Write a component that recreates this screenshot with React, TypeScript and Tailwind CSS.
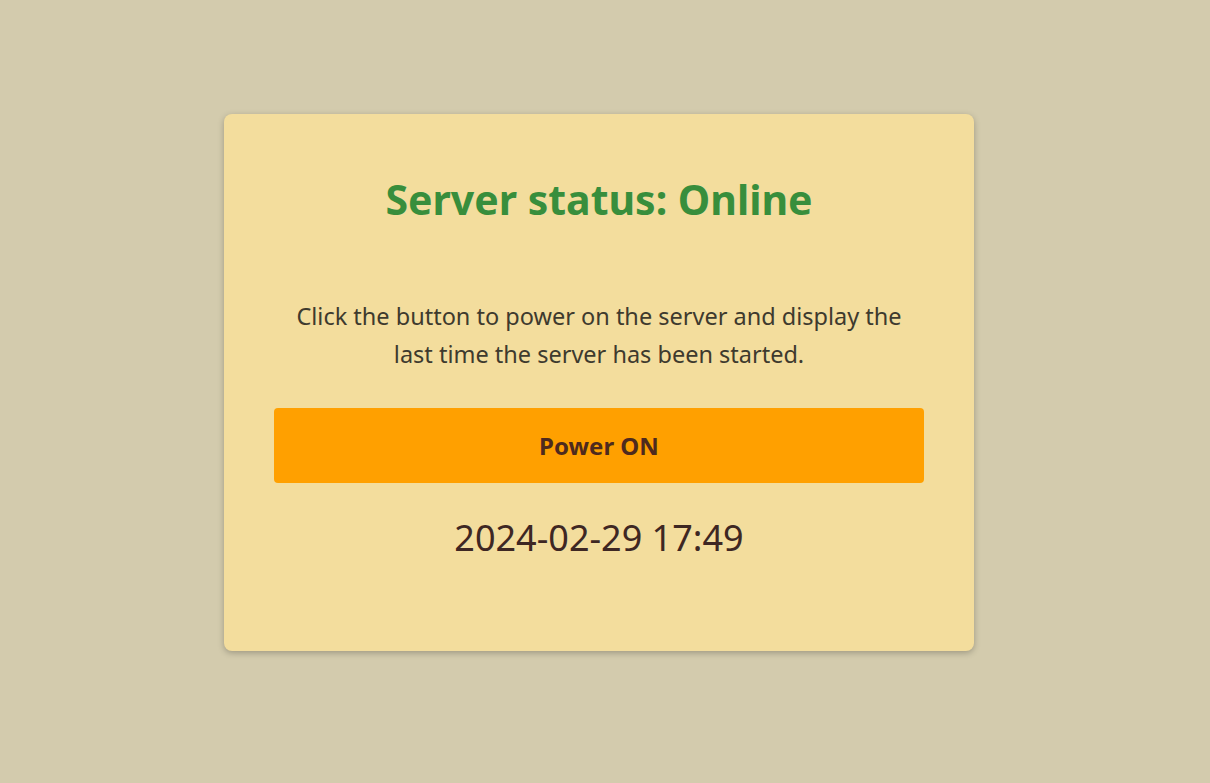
import React from 'react';

const App = () => {
  return (
    <div className="min-h-screen w-full bg-[#d3cbad] flex justify-center pr-[12px] pt-[114px] font-['Noto_Sans',sans-serif]">
      <div className="w-[750px] h-fit bg-[#f3dd9d] rounded-lg shadow-[0_2px_6px_rgba(0,0,0,0.25)] px-[50px] pt-[61px] pb-[91px] flex flex-col items-center text-center">
        <h1 className="text-[41px] leading-[48px] font-bold text-[#388e3c]">Server status: Online</h1>
        <p className="mt-[74px] text-[23.5px] leading-[38px] text-[#3e3a2e] max-w-[615px]">
          Click the button to power on the server and display the last time the server has been started.
        </p>
        <button className="mt-[35px] w-full h-[75px] bg-[#ffa000] rounded text-[24px] font-bold text-[#4e2a1e]">
          Power ON
        </button>
        <div className="mt-[33px] text-[36px] leading-[44px] text-[#3e2723]">2024-02-29 17:49</div>
      </div>
    </div>
  );
};

export default App;
